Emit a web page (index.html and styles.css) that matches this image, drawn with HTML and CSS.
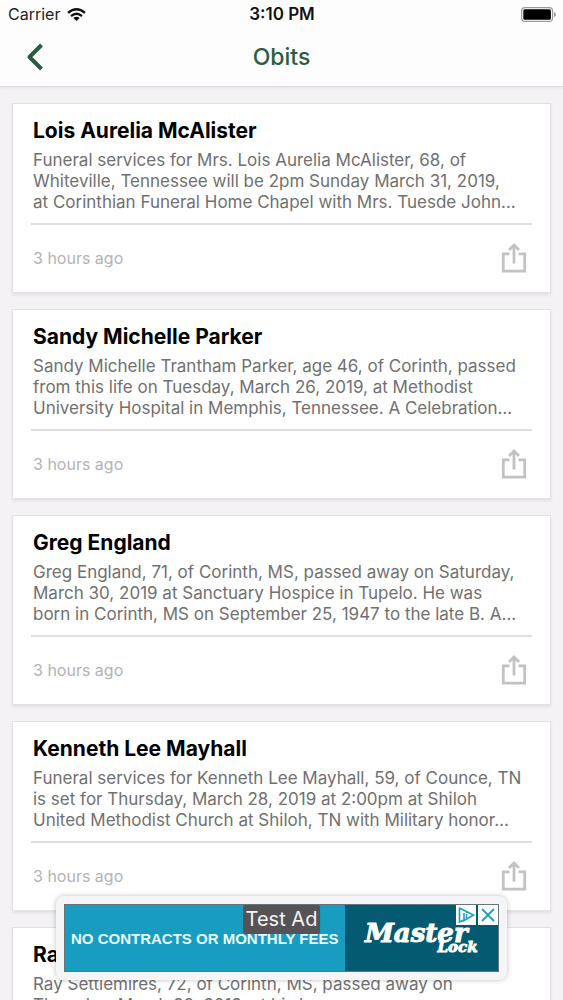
FILE: index.html
```html
<!DOCTYPE html>
<html lang="en">
<head>
<meta charset="utf-8">
<meta name="viewport" content="width=device-width, initial-scale=1">
<title>Obits</title>
<link rel="stylesheet" href="styles.css">
</head>
<body>
<svg class="symbols" aria-hidden="true">
  <symbol id="share" viewBox="0 0 26 30">
    <path d="M8.500 10.800H2.300V28.200H23.700V10.800H17.500" fill="none" stroke="currentColor" stroke-width="2.800"/>
    <path d="M13 20.500V3M8 7L13 2L18 7" fill="none" stroke="currentColor" stroke-width="2.800"/>
  </symbol>
</svg>
<header class="top">
  <div class="status">
    <div class="carrier">Carrier
      <svg class="wifi" viewBox="0 0 19 13" aria-label="Wi-Fi"><g fill="none" stroke="#111" stroke-width="2.3"><path d="M1 4.900Q9.500 -2.500 18 4.900"/><path d="M4 8.100Q9.500 3.300 15 8.100"/></g><path d="M6.300 10Q9.500 7.300 12.700 10L9.500 13Z" fill="#111"/></svg>
    </div>
    <div class="time">3:10 PM</div>
    <svg class="battery" viewBox="0 0 35 15" aria-label="Battery"><rect x=".6" y=".6" width="31" height="13.800" rx="3.500" fill="#fff" stroke="#999" stroke-width="1.200"/><rect x="2.300" y="2.300" width="27.600" height="10.400" rx="1.500"/><path d="M33 5Q35 6 35 7.500T33 10Z" fill="#999"/></svg>
  </div>
  <nav class="bar">
    <button class="back" aria-label="Back"><svg viewBox="0 0 18 28"><path d="M15.500 2L3.500 14L15.500 26" fill="none" stroke="currentColor" stroke-width="4" stroke-linejoin="round"/></svg></button>
    <h1>Obits</h1>
  </nav>
</header>
<main class="feed">
  <article class="card">
    <h2>Lois Aurelia McAlister</h2>
    <p>Funeral services for Mrs. Lois Aurelia McAlister, 68, of<br>Whiteville, Tennessee will be 2pm Sunday March 31, 2019,<br>at Corinthian Funeral Home Chapel with Mrs. Tuesde John…</p>
    <footer><time>3 hours ago</time><button class="share" aria-label="Share"><svg><use href="#share"/></svg></button></footer>
  </article>
  <article class="card">
    <h2>Sandy Michelle Parker</h2>
    <p>Sandy Michelle Trantham Parker, age 46, of Corinth, passed<br>from this life on Tuesday, March 26, 2019, at Methodist<br>University Hospital in Memphis, Tennessee. A Celebration…</p>
    <footer><time>3 hours ago</time><button class="share" aria-label="Share"><svg><use href="#share"/></svg></button></footer>
  </article>
  <article class="card">
    <h2>Greg England</h2>
    <p>Greg England, 71, of Corinth, MS, passed away on Saturday,<br>March 30, 2019 at Sanctuary Hospice in Tupelo. He was<br>born in Corinth, MS on September 25, 1947 to the late B. A…</p>
    <footer><time>3 hours ago</time><button class="share" aria-label="Share"><svg><use href="#share"/></svg></button></footer>
  </article>
  <article class="card">
    <h2>Kenneth Lee Mayhall</h2>
    <p>Funeral services for Kenneth Lee Mayhall, 59, of Counce, TN<br>is set for Thursday, March 28, 2019 at 2:00pm at Shiloh<br>United Methodist Church at Shiloh, TN with Military honor…</p>
    <footer><time>3 hours ago</time><button class="share" aria-label="Share"><svg><use href="#share"/></svg></button></footer>
  </article>
  <article class="card">
    <h2>Ray Settlemires</h2>
    <p>Ray Settlemires, 72, of Corinth, MS, passed away on<br>Thursday, March 28, 2019, at his home.</p>
    <footer><time>3 hours ago</time><button class="share" aria-label="Share"><svg><use href="#share"/></svg></button></footer>
  </article>
</main>
<aside class="ad">
  <div class="banner">
    <div class="offer">NO CONTRACTS OR MONTHLY FEES</div>
    <div class="brand"><div class="logo"><span class="master">Master</span><span class="lock">Lock</span></div></div>
    <span class="test">Test Ad</span>
    <div class="choices">
      <button aria-label="Ad choices"><svg viewBox="0 0 20 20"><path d="M3.500 3L17.500 10L8 15.500V8M3.500 2.500V17L8 15" fill="none" stroke="#18a0bd" stroke-width="1.600"/><path d="M10.500 9V13M10.500 6.500V8" stroke="#18a0bd" stroke-width="1.500"/></svg></button>
      <button aria-label="Close ad"><svg viewBox="0 0 20 20"><path d="M4 4L16 16M16 4L4 16" stroke="#18a0bd" stroke-width="1.800"/></svg></button>
    </div>
  </div>
</aside>
</body>
</html>
```
FILE: styles.css
```css
* { box-sizing: border-box; }
html, body { height: 100%; }
body {
  margin: 0;
  display: flex;
  flex-direction: column;
  overflow: hidden;
  background: #f4f2f5;
  color: #000;
  font-family: Inter, "Liberation Sans", sans-serif;
}
button { padding: 0; border: 0; background: none; cursor: pointer; }
svg { display: block; }
.symbols { position: absolute; width: 0; height: 0; }

.top {
  flex: none;
  background: #fefdfe;
  border-bottom: 1px solid #dddbde;
  box-shadow: 0 1px 3px rgba(0, 0, 0, 0.06);
}
.status {
  display: grid;
  grid-template-columns: 1fr auto 1fr;
  align-items: center;
  height: 28px;
  padding: 0 7px 0 8px;
  font-size: 16px;
  color: #222;
}
.carrier { display: flex; align-items: center; gap: 7px; }
.wifi { width: 19px; height: 13px; }
.time { font-size: 17px; font-weight: 600; color: #111; }
.battery { width: 35px; height: 15px; justify-self: end; }
.bar {
  display: grid;
  grid-template-columns: 1fr auto 1fr;
  align-items: center;
  height: 58px;
  padding: 0 26px;
  color: #2a5c43;
}
.back { justify-self: start; color: inherit; }
.back svg { width: 18px; height: 28px; }
.bar h1 { margin: 0; font-size: 23px; font-weight: 500; }

.feed {
  flex: 1;
  min-height: 0;
  overflow: hidden;
  display: flex;
  flex-direction: column;
  gap: 16px;
  padding: 16px 12px 0;
}
.card {
  flex: none;
  padding: 13px 18px 0;
  background: #fff;
  border: 1px solid #e3e1e5;
  box-shadow: 0 2px 3px rgba(0, 0, 0, 0.08);
}
.card h2 {
  margin: 0;
  padding-left: 2px;
  font-size: 21px;
  line-height: 28px;
  font-weight: 700;
}
.card p {
  margin: 5px 0 0;
  padding: 0 0 10px 2px;
  border-bottom: 2px solid #dfdde0;
  font-size: 17px;
  line-height: 21px;
  color: #707070;
  white-space: nowrap;
}
.card footer {
  display: flex;
  justify-content: space-between;
  align-items: center;
  height: 67px;
  padding: 0 5px 2px 2px;
  font-size: 16px;
  color: #b4b2b5;
}
.share { color: #c3c1c4; }
.share svg { width: 26px; height: 30px; }

.ad {
  position: fixed;
  left: 56px;
  right: 56px;
  bottom: 20px;
  padding: 8px;
  border-radius: 8px;
  background: #f5f4f6;
  box-shadow: 0 0 5px rgba(0, 0, 0, 0.25);
}
.banner {
  position: relative;
  display: grid;
  grid-template-columns: 281fr 154fr;
  height: 68px;
  border: 1px solid #66757b;
}
.offer {
  display: flex;
  align-items: center;
  padding: 1px 0 0 6px;
  background: #189dc0;
  color: #e9f8fc;
  font: bold 15px "Liberation Sans", sans-serif;
  white-space: nowrap;
}
.brand {
  display: flex;
  align-items: center;
  justify-content: center;
  background: #045a70;
  color: #fff;
}
.logo {
  display: flex;
  flex-direction: column;
  font-family: "DejaVu Serif", serif;
  font-style: italic;
  font-weight: bold;
  -webkit-text-stroke: 1px #fff;
}
.master { padding-right: 10px; font-size: 26px; line-height: 18px; }
.lock { align-self: flex-end; font-size: 15px; line-height: 10px; }
.test {
  position: absolute;
  left: 50%;
  top: 0;
  transform: translateX(-50%);
  padding: 0 3px;
  border-radius: 2px;
  background: #555356;
  color: #f3f3f3;
  font-size: 20px;
  line-height: 29px;
  white-space: nowrap;
}
.choices { position: absolute; top: 0; right: 0; display: flex; gap: 2px; }
.choices button { background: #fff; }
.choices svg { width: 20px; height: 20px; }
```
